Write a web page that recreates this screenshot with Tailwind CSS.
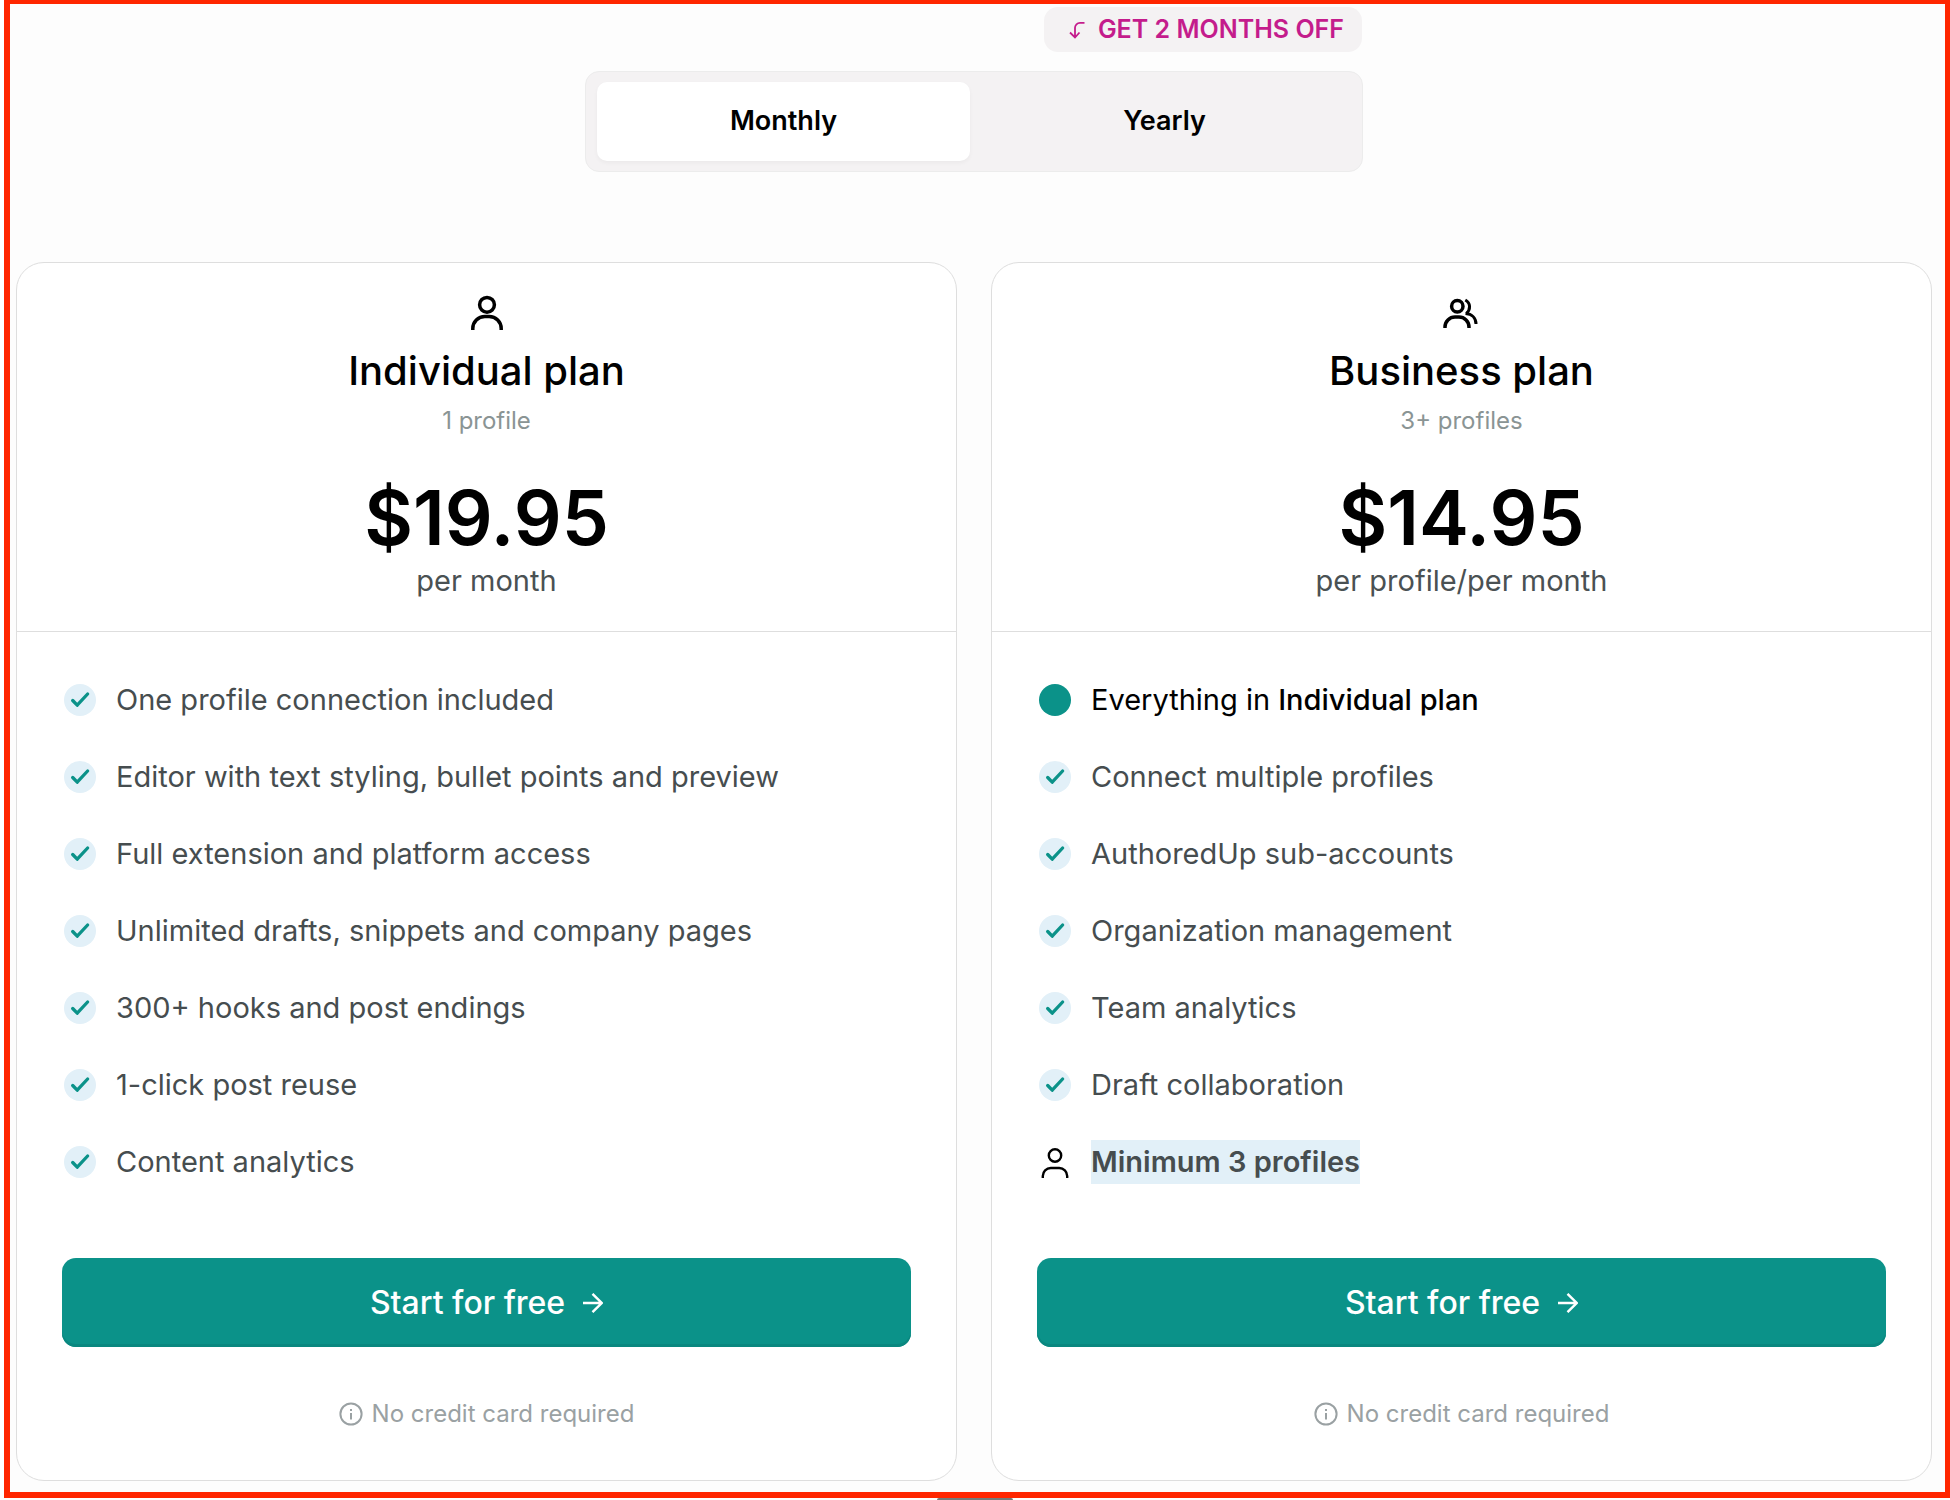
<!DOCTYPE html>
<html lang="en">
<head>
<meta charset="utf-8">
<meta name="viewport" content="width=device-width, initial-scale=1">
<title>Pricing</title>
<script src="https://cdn.jsdelivr.net/npm/@tailwindcss/browser@4"></script>
</head>
<body class="bg-white font-['Inter',sans-serif] text-black">
<svg class="hidden" aria-hidden="true">
  <symbol id="check" viewBox="0 0 32 32"><circle cx="16" cy="16" r="16" fill="#e2f0f8"/><path d="M8.700 16.500l4.500 4.700L23.600 10" fill="none" stroke="#0b9289" stroke-width="3.300" stroke-linecap="round" stroke-linejoin="round"/></symbol>
  <symbol id="arrow" viewBox="0 0 20 20"><path d="M0 10h18.5M9.5 .8l9.2 9.2-9.2 9.2" fill="none" stroke="currentColor" stroke-width="2.4"/></symbol>
  <symbol id="info" viewBox="0 0 24 24"><g fill="none" stroke="currentColor" stroke-width="2"><circle cx="12" cy="12" r="10.6"/><path d="M12 11v6.5M12 7v2"/></g></symbol>
</svg>
<div class="ml-1 border-t-4 border-r-5 border-b-6 border-l-6 border-[#ff2600] bg-[#fdfdfd] pt-[3px] pr-[13px] pb-[11px] pl-[6px]">
  <div class="mx-auto flex w-[778px] flex-col items-end">
    <p class="mr-px flex h-[45px] items-center gap-3 rounded-[14px] bg-[#f4f2f3] pr-[18px] pl-6 text-[25px] font-semibold text-[#c41c8c]">
      <svg class="size-[18px]" viewBox="0 0 18 18" fill="none" stroke="currentColor" stroke-width="1.8" aria-hidden="true"><path d="M16.500 1.800h-4.500A5 5 0 0 0 7 6.800V16.500M2 11.500l5 5 4.500-5"/></svg>
      GET 2 MONTHS OFF
    </p>
    <div class="mt-[19px] grid w-full grid-cols-2 gap-2 rounded-[14px] border border-[#ececec] bg-[#f4f2f3] px-[11px] py-[10px] text-[27px] leading-[77px] font-semibold">
      <button type="button" aria-pressed="true" class="rounded-[10px] bg-white pb-[2px] shadow-[0_2px_4px_rgba(0,0,0,0.04)]">Monthly</button>
      <button type="button" aria-pressed="false" class="rounded-[10px] pb-[2px]">Yearly</button>
    </div>
  </div>

  <main class="mt-[90px] grid grid-cols-2 gap-[34px]">
    <section class="rounded-[28px] border border-[#dedede] bg-white">
      <header class="flex flex-col items-center border-b border-[#dedede] pt-[29px] pb-8">
        <svg class="size-10" viewBox="0 0 40 40" fill="none" stroke="currentColor" stroke-width="3.500" aria-hidden="true"><circle cx="20" cy="12.800" r="7.400"/><path d="M5.800 38v-1.500a12 12 0 0 1 12-12h4.400a12 12 0 0 1 12 12V38"/></svg>
        <h2 class="mt-[15px] text-[40px] leading-[48px] font-medium">Individual plan</h2>
        <p class="mt-[10px] text-[24px] leading-8 text-[#8a9494]">1 profile</p>
        <p class="mt-[43px] text-[75px] leading-[76px] font-semibold">$19.95</p>
        <p class="mt-[7px] text-[29px] leading-9 text-[#4a5153]">per month</p>
      </header>
      <div class="px-[45px] pt-[46px] pb-[50px]">
        <ul class="flex flex-col gap-[33px] px-[2px] text-[29px] leading-[44px] text-[#464d4f]">
          <li class="flex items-center gap-5"><svg class="size-8"><use href="#check"/></svg>One profile connection included</li>
          <li class="flex items-center gap-5"><svg class="size-8"><use href="#check"/></svg>Editor with text styling, bullet points and preview</li>
          <li class="flex items-center gap-5"><svg class="size-8"><use href="#check"/></svg>Full extension and platform access</li>
          <li class="flex items-center gap-5"><svg class="size-8"><use href="#check"/></svg>Unlimited drafts, snippets and company pages</li>
          <li class="flex items-center gap-5"><svg class="size-8"><use href="#check"/></svg>300+ hooks and post endings</li>
          <li class="flex items-center gap-5"><svg class="size-8"><use href="#check"/></svg>1-click post reuse</li>
          <li class="flex items-center gap-5"><svg class="size-8"><use href="#check"/></svg>Content analytics</li>
        </ul>
        <button type="button" class="mt-[74px] flex h-[89px] w-full items-center justify-center gap-[18px] rounded-[14px] bg-[#0b9289] text-[32px] font-medium text-white shadow-[inset_0_-3px_0_#0a877f]">Start for free<svg class="size-5"><use href="#arrow"/></svg></button>
        <p class="mt-[51px] flex items-center justify-center gap-[9px] text-[24px] leading-8 text-[#9aa1a3]"><svg class="size-6"><use href="#info"/></svg>No credit card required</p>
      </div>
    </section>

    <section class="rounded-[28px] border border-[#dedede] bg-white">
      <header class="flex flex-col items-center border-b border-[#dedede] pt-[29px] pb-8">
        <svg class="size-10" viewBox="0 0 40 40" fill="none" stroke="currentColor" stroke-width="3.500" aria-hidden="true"><circle cx="15.300" cy="14.300" r="5.700"/><path d="M3 36v-1a10 10 0 0 1 10-10h4a10 10 0 0 1 10 10v1"/><path d="M23.300 8c5.500 3 5.500 9.500 1 13.500M23.500 21.500c6.500 .500 10.500 4.500 10.500 10.500" stroke-width="3"/></svg>
        <h2 class="mt-[15px] text-[40px] leading-[48px] font-medium">Business plan</h2>
        <p class="mt-[10px] text-[24px] leading-8 text-[#8a9494]">3+ profiles</p>
        <p class="mt-[43px] text-[75px] leading-[76px] font-semibold">$14.95</p>
        <p class="mt-[7px] text-[29px] leading-9 text-[#4a5153]">per profile/per month</p>
      </header>
      <div class="px-[45px] pt-[46px] pb-[50px]">
        <ul class="flex flex-col gap-[33px] px-[2px] text-[29px] leading-[44px] text-[#464d4f]">
          <li class="flex items-center gap-5 text-black"><span class="size-8 rounded-full bg-[#0b9289]"></span><span>Everything in <strong class="font-medium">Individual plan</strong></span></li>
          <li class="flex items-center gap-5"><svg class="size-8"><use href="#check"/></svg>Connect multiple profiles</li>
          <li class="flex items-center gap-5"><svg class="size-8"><use href="#check"/></svg>AuthoredUp sub-accounts</li>
          <li class="flex items-center gap-5"><svg class="size-8"><use href="#check"/></svg>Organization management</li>
          <li class="flex items-center gap-5"><svg class="size-8"><use href="#check"/></svg>Team analytics</li>
          <li class="flex items-center gap-5"><svg class="size-8"><use href="#check"/></svg>Draft collaboration</li>
          <li class="flex items-center gap-5"><svg class="size-8 overflow-visible text-black" viewBox="0 0 32 32" fill="none" stroke="currentColor" stroke-width="2.400" aria-hidden="true"><circle cx="16" cy="9.500" r="6.200"/><path d="M3.800 32v-2a8 8 0 0 1 8-8h8.400a8 8 0 0 1 8 8v2"/></svg><strong class="bg-[#e2f0f8] font-semibold">Minimum 3 profiles</strong></li>
        </ul>
        <button type="button" class="mt-[74px] flex h-[89px] w-full items-center justify-center gap-[18px] rounded-[14px] bg-[#0b9289] text-[32px] font-medium text-white shadow-[inset_0_-3px_0_#0a877f]">Start for free<svg class="size-5"><use href="#arrow"/></svg></button>
        <p class="mt-[51px] flex items-center justify-center gap-[9px] text-[24px] leading-8 text-[#9aa1a3]"><svg class="size-6"><use href="#info"/></svg>No credit card required</p>
      </div>
    </section>
  </main>
</div>
<div class="mx-auto h-[2px] w-[76px] rounded-t-[2px] bg-[#747a78]"></div>
</body>
</html>
